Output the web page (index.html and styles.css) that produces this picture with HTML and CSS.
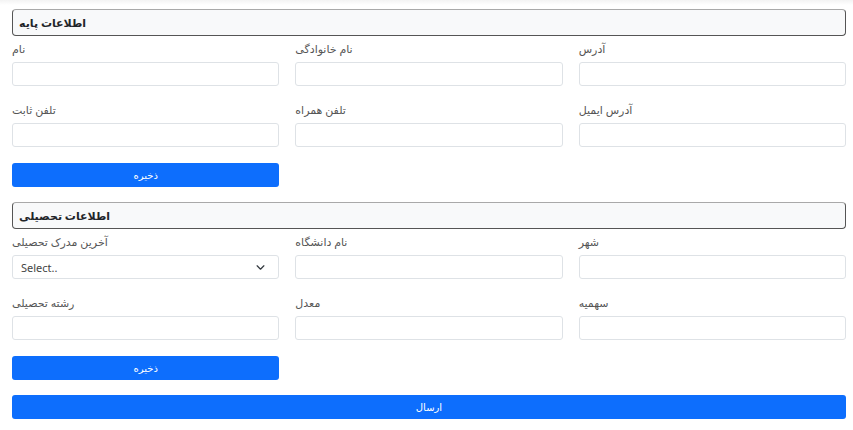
FILE: index.html
```html
<!DOCTYPE html>
<html lang="fa">
<head>
    <meta charset="UTF-8">
    <meta name="viewport" content="width=device-width, initial-scale=1.0">
    <title>فرم اطلاعات</title>
    <link rel="stylesheet" href="styles.css">
</head>
<body>
    <main class="page">
        <section class="block">
            <h2 class="block-title">اطلاعات پایه</h2>
            <div class="grid">
                <div class="field">
                    <label for="fname">نام</label>
                    <input type="text" id="fname">
                </div>
                <div class="field">
                    <label for="lname">نام خانوادگی</label>
                    <input type="text" id="lname">
                </div>
                <div class="field">
                    <label for="addr">آدرس</label>
                    <input type="text" id="addr">
                </div>
                <div class="field">
                    <label for="tel">تلفن ثابت</label>
                    <input type="text" id="tel">
                </div>
                <div class="field">
                    <label for="mobile">تلفن همراه</label>
                    <input type="text" id="mobile">
                </div>
                <div class="field">
                    <label for="email">آدرس ایمیل</label>
                    <input type="text" id="email">
                </div>
            </div>
            <div class="grid">
                <button class="btn">ذخیره</button>
            </div>
        </section>

        <section class="block">
            <h2 class="block-title">اطلاعات تحصیلی</h2>
            <div class="grid">
                <div class="field">
                    <label for="degree">آخرین مدرک تحصیلی</label>
                    <div class="select">
                        <span>Select..</span>
                        <svg width="9" height="9" viewBox="0 0 16 16"><path d="M2 5l6 6 6-6" fill="none" stroke="#343a40" stroke-width="2.2" stroke-linecap="round" stroke-linejoin="round"/></svg>
                    </div>
                </div>
                <div class="field">
                    <label for="uni">نام دانشگاه</label>
                    <input type="text" id="uni">
                </div>
                <div class="field">
                    <label for="city">شهر</label>
                    <input type="text" id="city">
                </div>
                <div class="field">
                    <label for="major">رشته تحصیلی</label>
                    <input type="text" id="major">
                </div>
                <div class="field">
                    <label for="avg">معدل</label>
                    <input type="text" id="avg">
                </div>
                <div class="field">
                    <label for="quota">سهمیه</label>
                    <input type="text" id="quota">
                </div>
            </div>
            <div class="grid">
                <button class="btn">ذخیره</button>
            </div>
        </section>

        <button class="btn btn-wide">ارسال</button>
    </main>
</body>
</html>
```

FILE: styles.css
```css
html {
    background: #fff linear-gradient(#f3f3f3, #fff) no-repeat;
    background-size: 100% 5px;
}

body {
    margin: 0;
    font-family: "Noto Sans", "DejaVu Sans", sans-serif;
    color: #212529;
}

.page {
    width: 834px;
    padding: 9px 7px 0 12px;
}

.block {
    margin-bottom: 15px;
}

.block-title {
    margin: 0;
    height: 25px;
    line-height: 25px;
    padding: 0 6px;
    font-size: 11px;
    font-weight: 600;
    background: #f8f9fa;
    border: 1px solid #555;
    border-top-color: #a9a9a9;
    border-radius: 4px;
    direction: rtl;
    display: flex;
    justify-content: flex-end;
}

.grid {
    display: grid;
    grid-template-columns: 1fr 1fr 1fr;
    column-gap: 16px;
    row-gap: 11px;
}

.grid + .grid {
    margin-top: 16px;
}

.field label {
    display: block;
    margin: 4px 0;
    height: 18px;
    line-height: 18px;
    font-size: 11px;
    color: #555;
}

.field input,
.select {
    display: block;
    box-sizing: border-box;
    width: 100%;
    height: 24px;
    margin: 0;
    border: 1px solid #dee2e6;
    border-radius: 3px;
    background: #fff;
}

.select {
    display: flex;
    align-items: center;
    justify-content: space-between;
    padding: 0 13px 0 8px;
    font-size: 11px;
    color: #444;
}

.btn {
    all: unset;
    display: block;
    box-sizing: border-box;
    height: 24px;
    background: #0d6efd;
    border-radius: 3px;
    color: #fff;
    font-size: 10px;
    text-align: center;
    line-height: 24px;
}

.btn-wide {
    width: 100%;
}
```
